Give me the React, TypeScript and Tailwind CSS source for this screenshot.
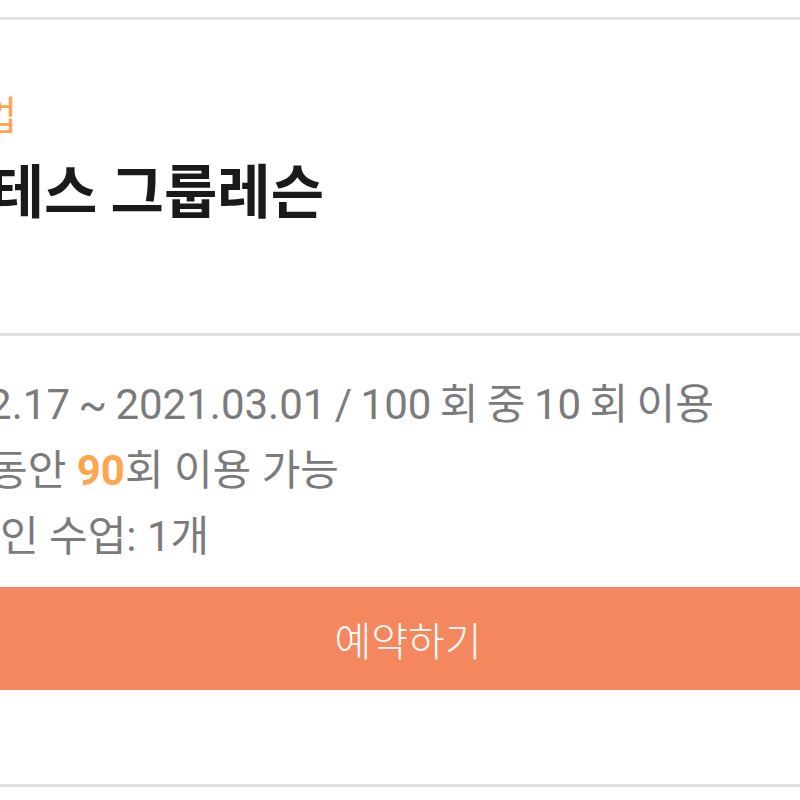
import React from "react";

const cjk = { fontFamily: '"Noto Sans CJK KR", "Noto Sans", sans-serif' };
const mixed = { fontFamily: 'Roboto, "Noto Sans CJK KR", sans-serif' };

export default function App() {
  return (
    <div className="w-[800px] h-[800px] overflow-hidden bg-white" style={cjk}>
      <div className="h-[17px]" />
      <div className="h-[3px] bg-[#e3e3e3]" />

      {/* Header */}
      <div className="h-[313px] pt-[69px]">
        <p className="ml-[-130px] whitespace-nowrap text-[40px] leading-[48px] text-[#ffa54f]">
          <span className="text-transparent">그룹수</span>업
        </p>
        <h1 className="mt-[18px] ml-[-116px] whitespace-nowrap text-[58px] font-bold leading-[66px] text-[#1a1a1a]">
          필라테스 그룹레슨
        </h1>
      </div>

      <div className="h-[3px] bg-[#e0e0e0]" />

      {/* Ticket info */}
      <div
        className="pt-[36px] text-[42px] leading-[66px] text-[#7b7b7b] whitespace-nowrap"
        style={mixed}
      >
        <p className="ml-[-141px] [word-spacing:-2px]">
          2020.12.17 ~ 2021.03.01 / 100 회 중 10 회 이용
        </p>
        <p className="ml-[-11px]">
          동안 <span className="font-bold text-[#ffa54f]">90</span>회 이용 가능
        </p>
        <p className="ml-[0px]">인 수업: 1개</p>
      </div>

      <button className="mt-[17px] flex h-[103px] w-full items-center justify-center bg-[#f5875f] pl-[16px] text-[40px] font-light text-white">
        예약하기
      </button>

      <div className="h-[94px]" />
      <div className="h-[3px] bg-[#e0e0e0]" />
    </div>
  );
}
